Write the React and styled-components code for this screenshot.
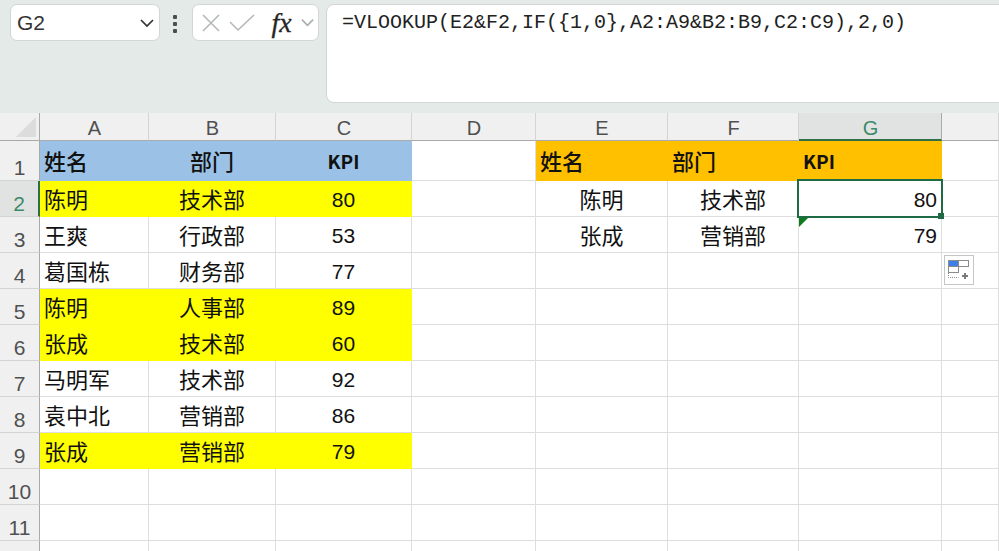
import React from 'react';
import styled, { createGlobalStyle } from 'styled-components';

const COLS = ['A', 'B', 'C', 'D', 'E', 'F', 'G'];
const ROW_COUNT = 12;

const YELLOW = '#ffff00';
const BLUE = '#9bc2e6';
const ORANGE = '#ffc000';

// 每行: [姓名, 部门, KPI, '', 姓名, 部门, KPI]
const SHEET = {
  1: { fill: [BLUE, BLUE, BLUE, null, ORANGE, ORANGE, ORANGE], bold: true, cells: ['姓名', '部门', 'KPI', '', '姓名', '部门', 'KPI'], align: ['left', 'center', 'center', 'left', 'left', 'left', 'left'] },
  2: { fill: [YELLOW, YELLOW, YELLOW], cells: ['陈明', '技术部', '80', '', '陈明', '技术部', '80'] },
  3: { cells: ['王爽', '行政部', '53', '', '张成', '营销部', '79'] },
  4: { cells: ['葛国栋', '财务部', '77'] },
  5: { fill: [YELLOW, YELLOW, YELLOW], cells: ['陈明', '人事部', '89'] },
  6: { fill: [YELLOW, YELLOW, YELLOW], cells: ['张成', '技术部', '60'] },
  7: { cells: ['马明军', '技术部', '92'] },
  8: { cells: ['袁中北', '营销部', '86'] },
  9: { fill: [YELLOW, YELLOW, YELLOW], cells: ['张成', '营销部', '79'] },
};

const BODY_ALIGN = ['left', 'center', 'center', 'left', 'center', 'center', 'right'];

const Global = createGlobalStyle`
  html, body { margin: 0; padding: 0; background: #fff; overflow: hidden; }
  body { font-family: "Liberation Sans", "Noto Sans CJK SC", sans-serif; }
`;

const Page = styled.div`
  width: 999px;
  height: 551px;
  overflow: hidden;
  display: flex;
  flex-direction: column;
`;

const FormulaArea = styled.div`
  height: 113px;
  box-sizing: border-box;
  flex: none;
  padding: 4px 0 0 10px;
  background: #e3eae8;
  display: flex;
  align-items: flex-start;
`;

const Box = styled.div`
  height: 37px;
  box-sizing: border-box;
  background: #fff;
  border: 1px solid #d2d6d5;
  border-radius: 7px;
  display: flex;
  align-items: center;
`;

const NameBox = styled(Box)`
  width: 150px;
  padding: 0 4px 0 6px;
  justify-content: space-between;
  font-size: 21px;
  color: #333;
`;

const Dots = styled.div`
  width: 32px;
  margin-left: -1px;
  margin-right: 1px;
  display: flex;
  flex-direction: column;
  align-items: center;
  gap: 3px;
  padding-top: 11px;

  i {
    width: 4px;
    height: 4px;
    background: #4a4f4e;
    border-radius: 1px;
  }
`;

const FxBox = styled(Box)`
  width: 127px;
  padding: 0 3px 0 8px;
  justify-content: space-between;
`;

const Fx = styled.span`
  font-family: "Liberation Serif", serif;
  font-style: italic;
  font-size: 28px;
  line-height: 30px;
  color: #262626;
  margin-left: 8px;
  -webkit-text-stroke: 0.3px #262626;
`;

const FormulaBox = styled.div`
  flex: 1;
  height: 99px;
  box-sizing: border-box;
  margin: 0 -12px 0 7px;
  padding: 5px 0 0 15px;
  background: #fff;
  border: 1px solid #d2d6d5;
  border-radius: 8px;
  font-family: "Liberation Mono", monospace;
  font-size: 20px;
  line-height: 26px;
  color: #222;
  white-space: nowrap;
`;

const Sheet = styled.div`
  position: relative;
  flex: 1;
  display: grid;
  grid-template-columns: 40px 109px 127px 136px 124px 132px 131px 143px 57px;
  grid-template-rows: 28px 40px repeat(${ROW_COUNT - 1}, 36px);
  background: #fff;
`;

const Corner = styled.div`
  box-sizing: border-box;
  background: #f0f0f0;
  border-right: 1px solid #a9a9a9;
  border-bottom: 1px solid #a9a9a9;
  position: relative;

  &::after {
    content: '';
    position: absolute;
    right: 3px;
    bottom: 3px;
    width: 0;
    height: 0;
    border-style: solid;
    border-width: 0 0 20px 20px;
    border-color: transparent transparent #dcdcdc transparent;
  }
`;

const ColHead = styled.div`
  box-sizing: border-box;
  display: flex;
  align-items: center;
  justify-content: center;
  padding: 4px 0 0 1px;
  font-size: 20px;
  background: ${(p) => (p.$active ? '#e1e3e3' : '#f0f0f0')};
  color: ${(p) => (p.$active ? '#3d8a68' : '#505050')};
  border-right: 1px solid ${(p) => (p.$active ? '#a9a9a9' : '#d4d4d4')};
  border-bottom: ${(p) => (p.$active ? '2px solid #2f6f47' : '1px solid #a9a9a9')};
`;

const RowHead = styled.div`
  box-sizing: border-box;
  display: flex;
  align-items: flex-end;
  justify-content: center;
  font-size: 21px;
  line-height: 24px;
  background: ${(p) => (p.$active ? '#e1e3e3' : '#f0f0f0')};
  color: ${(p) => (p.$active ? '#3d8a68' : '#505050')};
  border-right: ${(p) => (p.$active ? '2px solid #2f6f47' : '1px solid #a9a9a9')};
  border-bottom: 1px solid #d4d4d4;
`;

const Cell = styled.div`
  box-sizing: border-box;
  display: flex;
  align-items: center;
  padding: ${(p) => (p.$latin && !p.$bold ? '3px 4px 0' : p.$latin ? '0 4px' : '0 4px 2px')};
  font-size: ${(p) => (p.$latin ? (p.$bold ? 19 : 21) : 22)}px;
  color: #111;
  white-space: nowrap;
  font-family: ${(p) =>
    p.$bold ? '"Noto Sans CJK SC", sans-serif' : '"Liberation Sans", "Noto Sans CJK SC", sans-serif'};
  font-weight: ${(p) => (p.$bold ? (p.$latin ? 700 : 500) : 400)};
  justify-content: ${(p) => ({ left: 'flex-start', center: 'center', right: 'flex-end' }[p.$align])};
  background: ${(p) => p.$fill || '#fff'};
  border-right: 1px solid ${(p) => p.$fill || '#dedede'};
  border-bottom: 1px solid ${(p) => p.$fill || '#dedede'};
`;

// 选中单元格 G2 的边框
const Selection = styled.div`
  position: absolute;
  left: 797px;
  top: 66px;
  width: 146px;
  height: 39px;
  box-sizing: border-box;
  border: 2px solid #1f6b45;

  &::after {
    content: '';
    position: absolute;
    right: -3px;
    bottom: -3px;
    width: 6px;
    height: 6px;
    background: #1f6b45;
  }
`;

const ErrorMark = styled.div`
  position: absolute;
  left: 799px;
  top: 105px;
  width: 0;
  height: 0;
  border-style: solid;
  border-width: 9px 9px 0 0;
  border-color: #0f7b1f transparent transparent transparent;
`;

const PasteButton = styled.div`
  position: absolute;
  left: 944px;
  top: 142px;
  width: 30px;
  height: 30px;
  box-sizing: border-box;
  background: #fff;
  border: 1px solid #c6c6c6;
  display: flex;
  align-items: center;
  justify-content: center;
`;

const Chevron = ({ size = 16, color = '#333' }) => (
  <svg width={size} height={size} viewBox="0 0 16 16" fill="none">
    <path d="M2 5 8 11 14 5" stroke={color} strokeWidth="1.7" />
  </svg>
);

const Cross = () => (
  <svg width="20" height="20" viewBox="0 0 20 20" fill="none">
    <path d="M2 2 18 18M18 2 2 18" stroke="#b4b8b7" strokeWidth="1.6" />
  </svg>
);

const Check = () => (
  <svg width="26" height="20" viewBox="0 0 26 20" fill="none">
    <path d="M1 9 9 17 25 2" stroke="#b4b8b7" strokeWidth="1.6" />
  </svg>
);

const PasteIcon = () => (
  <svg width="22" height="20" viewBox="0 0 22 20" fill="none">
    <rect x="0.5" y="0.5" width="10" height="6" fill="#3f7fe8" stroke="#8b8b8b" />
    <rect x="10.5" y="0.5" width="10" height="6" fill="#fff" stroke="#8b8b8b" />
    <rect x="0.5" y="6.5" width="10" height="6" fill="#fff" stroke="#8b8b8b" />
    <path d="M0.5 13v4.5h10" stroke="#8b8b8b" strokeDasharray="1 1" />
    <path d="M17 13v6M14 16h6" stroke="#7b7b7b" strokeWidth="2" />
  </svg>
);

export default function App() {
  const rows = Array.from({ length: ROW_COUNT }, (_, i) => i + 1);
  return (
    <Page>
      <Global />
      <FormulaArea>
        <NameBox>
          G2
          <Chevron />
        </NameBox>
        <Dots>
          <i />
          <i />
          <i />
        </Dots>
        <FxBox>
          <Cross />
          <Check />
          <Fx>fx</Fx>
          <Chevron size={15} color="#a8acab" />
        </FxBox>
        <FormulaBox>=VLOOKUP(E2&amp;F2,IF(&#123;1,0&#125;,A2:A9&amp;B2:B9,C2:C9),2,0)</FormulaBox>
      </FormulaArea>
      <Sheet>
        <Corner />
        {COLS.map((c) => (
          <ColHead key={c} $active={c === 'G'}>
            {c}
          </ColHead>
        ))}
        <ColHead />
        {rows.map((r) => {
          const row = SHEET[r] || { cells: [] };
          return (
            <React.Fragment key={r}>
              {/* 第 12 行只露出一小截，看不到行号 */}
              <RowHead $active={r === 2}>{r < ROW_COUNT ? r : ''}</RowHead>
              {COLS.map((c, i) => (
                <Cell
                  key={c}
                  $bold={row.bold}
                  $latin={/^[A-Z0-9]+$/.test(row.cells[i] || '')}
                  $fill={row.fill && row.fill[i]}
                  $align={(row.align || BODY_ALIGN)[i]}
                >
                  {row.cells[i]}
                </Cell>
              ))}
              <Cell $align="left" />
            </React.Fragment>
          );
        })}
        <Selection />
        <ErrorMark />
        <PasteButton>
          <PasteIcon />
        </PasteButton>
      </Sheet>
    </Page>
  );
}
